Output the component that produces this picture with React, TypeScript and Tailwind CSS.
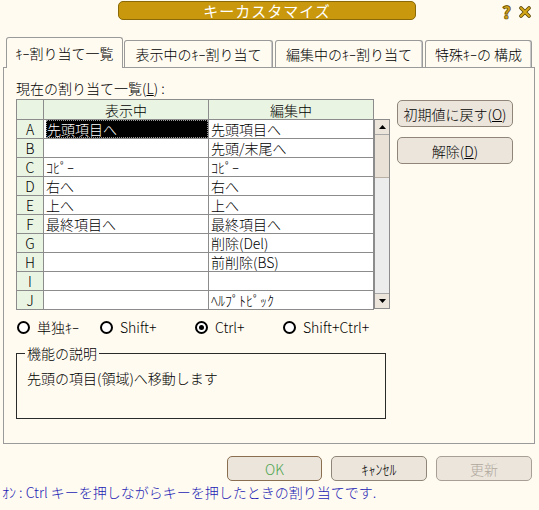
import { Fragment } from 'react'

const FONT = { fontFamily: '"Noto Sans CJK JP", "Noto Sans", sans-serif' }

const ROWS: [string, string, string][] = [
  ['A', '先頭項目へ', '先頭項目へ'],
  ['B', '', '先頭/末尾へ'],
  ['C', 'ｺﾋﾟｰ', 'ｺﾋﾟｰ'],
  ['D', '右へ', '右へ'],
  ['E', '上へ', '上へ'],
  ['F', '最終項目へ', '最終項目へ'],
  ['G', '', '削除(Del)'],
  ['H', '', '前削除(BS)'],
  ['I', '', ''],
  ['J', '', 'ﾍﾙﾌﾟﾄﾋﾟｯｸ'],
]

function Radio({ label, checked, width }: { label: string; checked?: boolean; width: string }) {
  return (
    <div className={`flex items-center gap-[7px] ${width}`}>
      <span className="w-[13px] h-[13px] rounded-full border-2 border-black bg-white flex items-center justify-center shrink-0">
        {checked && <span className="w-[5px] h-[5px] rounded-full bg-black" />}
      </span>
      <span className="leading-[16px]">{label}</span>
    </div>
  )
}

export default function App() {
  return (
    <div className="w-[539px] h-[510px] bg-[#fffbf0] text-[14px] font-light text-black flex flex-col overflow-hidden" style={FONT}>
      {/* Title */}
      <div className="flex items-start h-[20px]">
        <div className="ml-[118px] mt-px w-[298px] h-[19px] rounded-[5px] bg-[#c9980c] border border-[#8a6a08] flex items-center justify-center text-white text-[15px] font-normal leading-none tracking-[1px]">
          キーカスタマイズ
        </div>
        <div className="ml-auto mr-[8px] mt-[3px] flex items-center gap-[8px]">
          <span className="text-[#d2a216] text-[17px] font-black leading-none [-webkit-text-stroke:0.7px_#5a4500]">?</span>
          <svg width="12" height="12" viewBox="0 0 12 12">
            <path d="M2 2L10 10M10 2L2 10" stroke="#5a4500" strokeWidth="3.6" strokeLinecap="round" />
            <path d="M2 2L10 10M10 2L2 10" stroke="#d6a818" strokeWidth="2" strokeLinecap="round" />
          </svg>
        </div>
      </div>

      {/* Tabs */}
      <div className="mt-[17px] pl-[6px] flex items-end gap-[1px] relative z-10 h-[30px]">
        <div className="w-[117px] h-[31px] -mb-px bg-[#fffbf0] border border-b-0 border-[#9a9a9a] rounded-t-[3px] flex items-center justify-center">
          ｷｰ割り当て一覧
        </div>
        <div className="w-[149px] h-[27px] border border-b-0 border-[#9a9a9a] shadow-[inset_-1px_0_0_#c8c8c8] rounded-t-[3px] flex items-center justify-center">
          表示中のｷｰ割り当て
        </div>
        <div className="ml-px w-[148px] h-[27px] border border-b-0 border-[#9a9a9a] shadow-[inset_-1px_0_0_#c8c8c8] rounded-t-[3px] flex items-center justify-center">
          編集中のｷｰ割り当て
        </div>
        <div className="ml-px w-[107px] h-[27px] border border-b-0 border-[#9a9a9a] shadow-[inset_-1px_0_0_#c8c8c8] rounded-t-[3px] flex items-center justify-center">
          特殊ｷｰの 構成
        </div>
      </div>

      {/* Panel */}
      <div className="ml-[3px] w-[532px] h-[377px] border border-[#9a9a9a] pl-[12px] pt-[12px] flex flex-col">
        <div className="h-[16px] leading-[16px]">
          現在の割り当て一覧(<span className="underline">L</span>) :
        </div>

        <div className="mt-[3px] flex items-start">
          <div className="flex">
            <div className="w-[358px] border-l border-t border-[#8c8c8c] grid grid-cols-[27px_165px_165px]">
              <div className="h-[20px] bg-[#e9f4e2] border-r border-b border-[#8c8c8c]" />
              <div className="h-[20px] bg-[#e9f4e2] border-r border-b border-[#8c8c8c] flex items-center justify-center leading-none">表示中</div>
              <div className="h-[20px] bg-[#e9f4e2] border-r border-b border-[#8c8c8c] flex items-center justify-center leading-none">編集中</div>
              {ROWS.map(([k, a, b], i) => (
                <Fragment key={k}>
                  <div className="h-[19px] bg-[#e9f4e2] border-r border-b border-[#8c8c8c] flex items-center justify-center leading-none">{k}</div>
                  <div className="h-[19px] bg-white border-r border-b border-[#8c8c8c] flex items-center leading-none pl-[2px]">
                    {i === 0 ? (
                      <span className="bg-black text-white w-full h-full flex items-center pl-px outline-1 outline-dotted outline-[#9a9a9a] -outline-offset-1">{a}</span>
                    ) : a}
                  </div>
                  <div className="h-[19px] bg-white border-r border-b border-[#8c8c8c] flex items-center leading-none pl-[2px]">{b}</div>
                </Fragment>
              ))}
            </div>
            {/* Scrollbar */}
            <div className="mt-[20px] w-[16px] h-[190px] border border-[#8c8c8c] bg-[#ececec] flex flex-col">
              <div className="h-[15px] bg-[#ebe5db] border-b border-[#a8a8a8] flex items-center justify-center">
                <svg width="7" height="4" viewBox="0 0 7 4"><path d="M3.5 0L7 4H0Z" fill="#000" /></svg>
              </div>
              <div className="h-[43px] bg-[#e9e1d5] border-b border-[#b8b0a4]" />
              <div className="flex-1" />
              <div className="h-[15px] bg-[#ebe5db] border-t border-[#a8a8a8] flex items-center justify-center">
                <svg width="7" height="4" viewBox="0 0 7 4"><path d="M0 0H7L3.5 4Z" fill="#000" /></svg>
              </div>
            </div>
          </div>

          <div className="ml-[7px] mt-px flex flex-col gap-[10px]">
            <button className="w-[116px] h-[27px] rounded-[5px] bg-[#ebe5dc] border border-[#8f8679] flex items-center justify-center leading-none">
              初期値に戻す(<span className="underline">O</span>)
            </button>
            <button className="w-[116px] h-[27px] rounded-[5px] bg-[#ebe5dc] border border-[#8f8679] flex items-center justify-center leading-none">
              解除(<span className="underline">D</span>)
            </button>
          </div>
        </div>

        {/* Radios */}
        <div className="mt-[8px] ml-px h-[18px] flex items-center">
          <Radio label="単独ｷｰ" width="w-[83px]" />
          <Radio label="Shift+" width="w-[95px]" />
          <Radio label="Ctrl+" checked width="w-[88px]" />
          <Radio label="Shift+Ctrl+" width="" />
        </div>

        {/* Description group */}
        <div className="mt-[17px] w-[370px] h-[66px] border border-[#2a2a2a] relative pl-[10px] pt-[16px]">
          <span className="absolute -top-[9px] left-[8px] px-[2px] bg-[#fffbf0] leading-[16px]">機能の説明</span>
          <div className="leading-[16px]">先頭の項目(領域)へ移動します</div>
        </div>
      </div>

      {/* Dialog buttons */}
      <div className="mt-[12px] pr-[7px] flex justify-end gap-[9px]">
        <button className="w-[95px] h-[25px] rounded-[5px] bg-[#ebe5dc] border border-[#8a6e50] text-[#4ea44e] flex items-center justify-center leading-none">OK</button>
        <button className="w-[96px] h-[25px] rounded-[5px] bg-[#ebe5dc] border border-[#8f8679] flex items-center justify-center leading-none">ｷｬﾝｾﾙ</button>
        <button className="w-[96px] h-[25px] rounded-[5px] bg-[#ebe5dc] border border-[#a8a096] text-[#b0a89c] flex items-center justify-center leading-none">更新</button>
      </div>

      {/* Status */}
      <div className="mt-[3px] pl-[2px] h-[16px] leading-[16px] text-[#1c1cb4]">
        ｵﾝ : Ctrl キーを押しながらキーを押したときの割り当てです.
      </div>
    </div>
  )
}
